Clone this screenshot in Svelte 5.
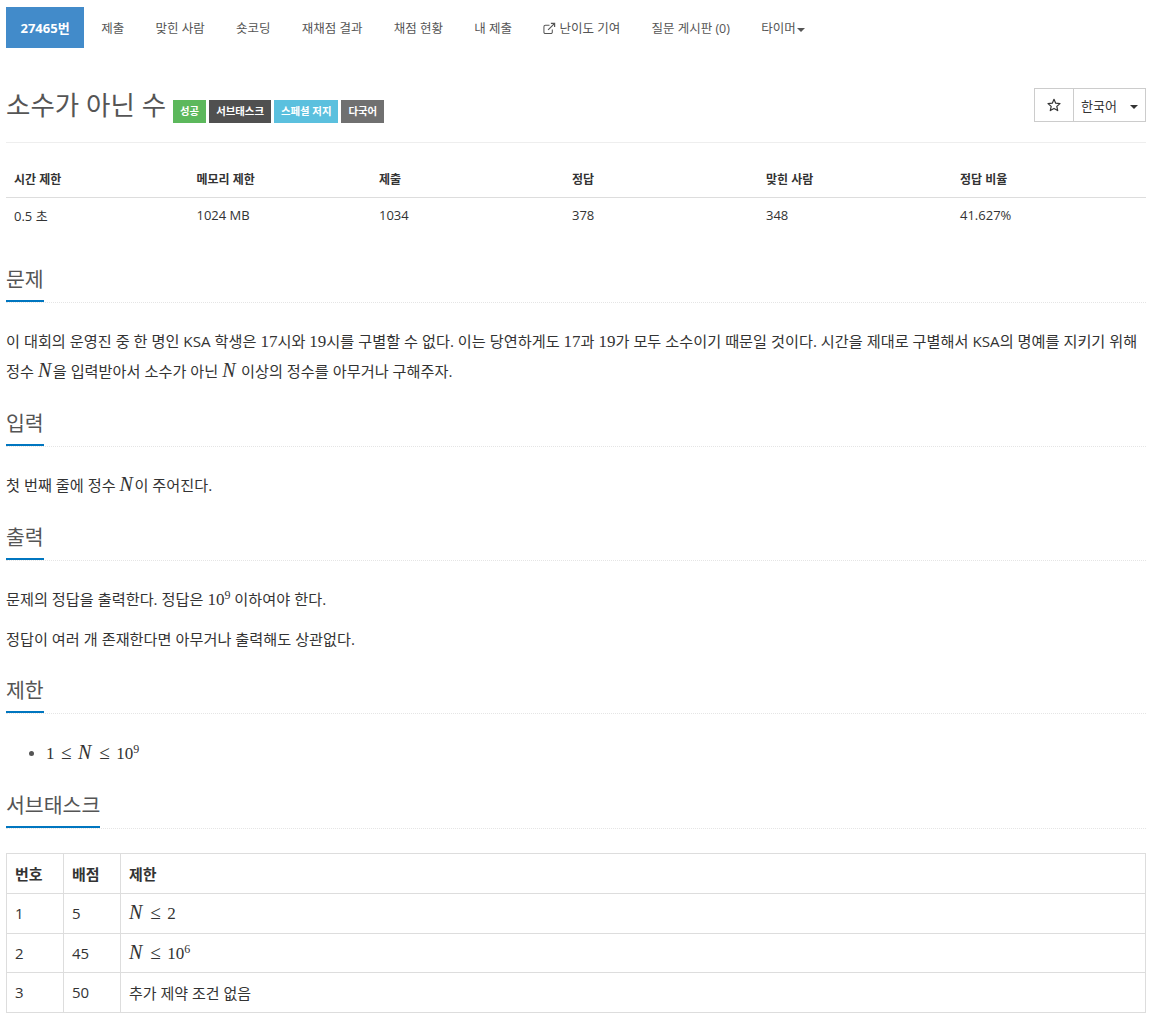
<script>
  const navItems = ['제출', '맞힌 사람', '숏코딩', '재채점 결과', '채점 현황', '내 제출'];
  const stats = [
    { head: '시간 제한', value: '0.5 초', width: 182.5 },
    { head: '메모리 제한', value: '1024 MB', width: 182.5 },
    { head: '제출', value: '1034', width: 193 },
    { head: '정답', value: '378', width: 194 },
    { head: '맞힌 사람', value: '348', width: 194 },
    { head: '정답 비율', value: '41.627%', width: 194 }
  ];
</script>

<div class="page">
  <ul class="nav">
    <li class="brand">27465번</li>
    {#each navItems as item}
      <li>{item}</li>
    {/each}
    <li>
      <svg class="ext" viewBox="0 0 14 14" width="13" height="13" aria-hidden="true">
        <path d="M10 8v3a1.5 1.5 0 0 1-1.5 1.5h-6A1.5 1.5 0 0 1 1 11V5a1.5 1.5 0 0 1 1.5-1.5H7" fill="none" stroke="currentColor" stroke-width="1.1"/>
        <path d="M5.5 8.5 12 2M8.5 1.5h4v4" fill="none" stroke="currentColor" stroke-width="1.3"/>
      </svg>
      난이도 기여
    </li>
    <li>질문 게시판 (0)</li>
    <li>타이머<span class="caret tight"></span></li>
  </ul>

  <div class="title-row">
    <h1>소수가 아닌 수</h1>
    <div class="labels">
      <span class="label green">성공</span>
      <span class="label dark">서브태스크</span>
      <span class="label cyan">스페셜 저지</span>
      <span class="label gray">다국어</span>
    </div>
    <div class="btn-group">
      <button type="button" class="star" aria-label="즐겨찾기">
        <svg viewBox="0 0 14 14" width="14" height="14" aria-hidden="true">
          <path d="M7 1.3 8.7 5.2l4.3.4-3.2 2.8.9 4.2L7 10.4l-3.7 2.2.9-4.2L1 5.6l4.3-.4z" fill="none" stroke="currentColor" stroke-width="1.2" stroke-linejoin="round"/>
        </svg>
      </button>
      <button type="button" class="lang">한국어<span class="caret"></span></button>
    </div>
  </div>

  <table class="stats">
    <thead>
      <tr>
        {#each stats as s}
          <th style="width:{s.width}px">{s.head}</th>
        {/each}
      </tr>
    </thead>
    <tbody>
      <tr>
        {#each stats as s}
          <td>{s.value}</td>
        {/each}
      </tr>
    </tbody>
  </table>

  <section class="first">
    <div class="headline"><h2>문제</h2></div>
    <p>이 대회의 운영진 중 한 명인 KSA 학생은 <span class="m">17</span>시와 <span class="m">19</span>시를 구별할 수 없다. 이는 당연하게도 <span class="m">17</span>과 <span class="m">19</span>가 모두 소수이기 때문일 것이다. 시간을 제대로 구별해서 KSA의 명예를 지키기 위해 정수 <span class="m"><i>N</i></span>을 입력받아서 소수가 아닌 <span class="m"><i>N</i></span> 이상의 정수를 아무거나 구해주자.</p>
  </section>

  <section>
    <div class="headline"><h2>입력</h2></div>
    <p>첫 번째 줄에 정수 <span class="m"><i>N</i></span>이 주어진다.</p>
  </section>

  <section>
    <div class="headline"><h2>출력</h2></div>
    <p>문제의 정답을 출력한다. 정답은 <span class="m">10<sup>9</sup></span> 이하여야 한다.</p>
    <p>정답이 여러 개 존재한다면 아무거나 출력해도 상관없다.</p>
  </section>

  <section class="limit">
    <div class="headline"><h2>제한</h2></div>
    <ul class="limits">
      <li><span class="m">1<span class="le">≤</span><i>N</i><span class="le">≤</span>10<sup>9</sup></span></li>
    </ul>
  </section>

  <section>
    <div class="headline"><h2>서브태스크</h2></div>
    <table class="subtasks">
      <thead>
        <tr><th class="narrow">번호</th><th class="narrow">배점</th><th>제한</th></tr>
      </thead>
      <tbody>
        <tr><td>1</td><td>5</td><td><span class="m"><i>N</i><span class="le">≤</span>2</span></td></tr>
        <tr><td>2</td><td>45</td><td><span class="m"><i>N</i><span class="le">≤</span>10<sup>6</sup></span></td></tr>
        <tr><td>3</td><td>50</td><td>추가 제약 조건 없음</td></tr>
      </tbody>
    </table>
  </section>
</div>

<style>
  :global(body) {
    margin: 0;
    background: #fff;
    color: #333;
    font-family: "Open Sans", "Noto Sans CJK KR", sans-serif;
    font-size: 14px;
  }
  .page { padding: 7px 14px 0 6px; }

  /* ===== Top nav ===== */
  .nav {
    display: flex;
    align-items: center;
    gap: 31.25px;
    height: 41px;
    margin: 0;
    padding: 0;
    list-style: none;
    font-size: 12.5px;
    color: #555;
  }
  .nav .brand {
    display: flex;
    align-items: center;
    height: 41px;
    padding: 0 14.5px;
    margin-right: -14.25px;
    background: #428bca;
    color: #fff;
    font-weight: 700;
    font-size: 13px;
  }
  .ext { vertical-align: -2px; }
  .caret {
    display: inline-block;
    margin-left: 13px;
    vertical-align: middle;
    border-top: 4px solid currentColor;
    border-left: 4px solid transparent;
    border-right: 4px solid transparent;
  }
  .caret.tight { margin-left: 1px; }

  /* ===== Title ===== */
  .title-row {
    display: flex;
    align-items: center;
    height: 54px;
    margin-top: 40px;
    border-bottom: 1px solid #eee;
  }
  h1 {
    margin: 0 7px 0 0;
    font-size: 26.5px;
    font-weight: 400;
    color: #555;
    line-height: 34px;
    position: relative;
    top: -10px;
  }
  .labels { display: flex; gap: 3px; position: relative; top: -4px; }
  .label {
    padding: 0 7px;
    height: 23px;
    line-height: 23px;
    font-size: 10.4px;
    font-weight: 700;
    color: #fff;
  }
  .green { background: #5cb85c; }
  .dark { background: #505050; }
  .cyan { background: #5bc0de; }
  .gray { background: #707070; }
  .btn-group { display: flex; margin-left: auto; position: relative; top: -10px; }
  .btn-group button {
    height: 34px;
    margin: 0;
    background: #fff;
    border: 1px solid #ccc;
    color: #333;
    font: inherit;
    font-size: 13px;
  }
  .btn-group .star { display: flex; align-items: center; justify-content: center; width: 40px; padding: 0; }
  .btn-group .lang { width: 73px; margin-left: -1px; padding: 0 0 0 7px; text-align: left; }

  /* ===== Stats table ===== */
  .stats {
    width: 100%;
    margin-top: 19px;
    border-collapse: collapse;
    table-layout: fixed;
    font-size: 13px;
  }
  .stats th {
    box-sizing: border-box;
    padding: 0 8px;
    height: 35px;
    text-align: left;
    font-size: 12px;
    font-weight: 700;
    border-bottom: 1px solid #ddd;
  }
  .stats td { padding: 0 8px; height: 35px; }

  /* ===== Sections ===== */
  .headline {
    margin-top: 19px;
    border-bottom: 1px dotted #e5e5e5;
    height: 41px;
  }
  .first .headline { margin-top: 28px; }
  .first p { margin-bottom: 1px; }
  .limit .headline { margin-top: 18px; }
  h2 {
    display: inline-block;
    margin: 0;
    height: 39px;
    line-height: 36px;
    font-size: 20.5px;
    font-weight: 400;
    color: #555;
    border-bottom: 2px solid #0076c0;
  }
  p {
    margin: 0;
    line-height: 30px;
    font-size: 15.2px;
    color: #333;
  }
  section p:first-of-type { margin-top: 23px; }
  p + p { margin-top: 10px; }
  /* math runs stay out of the line box so they can't push rows apart */
  .m { font-family: "Liberation Serif", serif; font-size: 17px; line-height: 0; }
  .m i { font-style: italic; font-size: 20px; line-height: 0; padding-right: 1.5px; }
  .le { margin: 0 6.5px; font-size: 19px; line-height: 0; }
  sup { font-size: 12px; line-height: 0; vertical-align: 6px; }

  .limits { margin: 26px 0 0; padding-left: 40px; line-height: 28px; }
  .limits li::marker { color: #555; }

  /* ===== Subtask table ===== */
  .subtasks {
    width: 100%;
    margin-top: 24px;
    border-collapse: collapse;
    font-size: 15px;
  }
  .subtasks th, .subtasks td {
    border: 1px solid #ddd;
    padding: 0 8px;
    height: 38.5px;
    text-align: left;
  }
  .subtasks th { font-weight: 700; height: 39.5px; }
  .narrow { width: 40px; }
</style>
